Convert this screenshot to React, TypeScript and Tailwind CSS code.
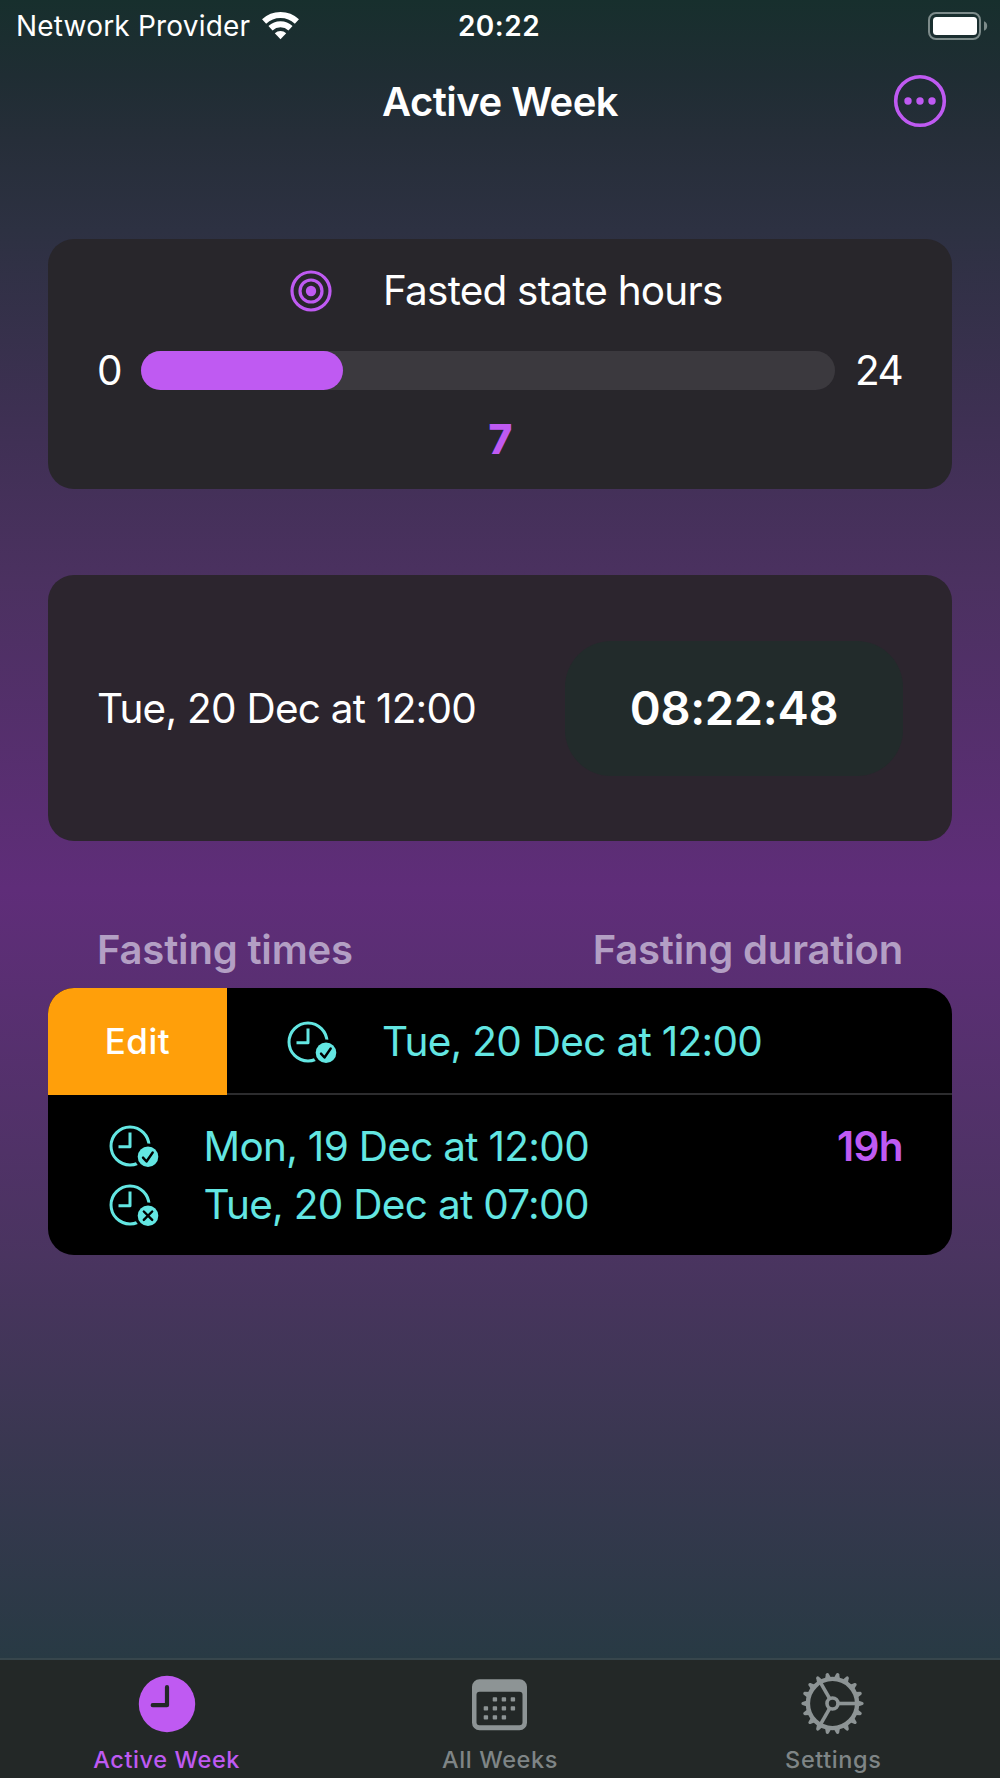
import type { ReactNode } from 'react';
import clsx from 'clsx';

const GOAL_HOURS = 7;
const DAY_HOURS = 24;

function WifiIcon() {
  return (
    <svg width="37" height="28" viewBox="0 0 37 28" className="text-white">
      <g fill="none" stroke="currentColor" strokeWidth="6">
        <path d="M2.1 9.5a24 24 0 0 1 32.8 0" />
        <path d="M8.5 16.3a14.7 14.7 0 0 1 20 0" />
      </g>
      <path d="M18.5 27.2l-5.7-5.9a8.2 8.2 0 0 1 11.4 0z" fill="currentColor" />
    </svg>
  );
}

function BatteryIcon() {
  return (
    <svg width="60" height="28" viewBox="0 0 60 28">
      <rect x="1" y="1" width="51" height="26" rx="7" fill="none" stroke="#7d8b8a" strokeWidth="2" />
      <rect x="5" y="5" width="44" height="18" rx="3.5" fill="#fff" />
      <path d="M56 9.2a5.2 5.2 0 0 1 0 9.6z" fill="#7d8b8a" />
    </svg>
  );
}

function MoreIcon() {
  return (
    <svg width="54" height="54" viewBox="0 0 54 54">
      <circle cx="27" cy="27" r="24.3" fill="none" stroke="#bf5af2" strokeWidth="3.6" />
      <circle cx="15" cy="27" r="3.7" fill="#bf5af2" />
      <circle cx="27" cy="27" r="3.7" fill="#bf5af2" />
      <circle cx="39" cy="27" r="3.7" fill="#bf5af2" />
    </svg>
  );
}

function TargetIcon() {
  return (
    <svg width="42" height="42" viewBox="0 0 42 42">
      <g fill="none" stroke="#bf5af2" strokeWidth="3.2">
        <circle cx="21" cy="21" r="19" />
        <circle cx="21" cy="21" r="11" />
      </g>
      <circle cx="21" cy="21" r="5.2" fill="#bf5af2" />
    </svg>
  );
}

function ClockBadgeIcon({ type }: { type: 'check' | 'cross' }) {
  return (
    <svg width="50" height="42" viewBox="0 0 50 42">
      <g fill="none" stroke="#63e6e2" strokeWidth="3" strokeLinejoin="round">
        <circle cx="21" cy="21" r="19" />
        <path d="M21 7.5v14.3H9.5" />
      </g>
      <circle cx="39" cy="31.7" r="13.2" fill="#000" />
      <circle cx="39" cy="31.7" r="10.3" fill="#63e6e2" />
      <path
        d={type === 'check' ? 'M34 32.6l3.5 3.9 6.2-9' : 'M34.8 27.5l8.4 8.4M43.2 27.5l-8.4 8.4'}
        fill="none"
        stroke="#000"
        strokeWidth="2.4"
        strokeLinecap="round"
        strokeLinejoin="round"
      />
    </svg>
  );
}

function ClockFillIcon() {
  return (
    <svg width="58" height="64" viewBox="0 0 58 64">
      <circle cx="29" cy="32" r="28.2" fill="#bf5af2" />
      <path
        d="M29 15.2v18H14.7"
        fill="none"
        stroke="#232827"
        strokeWidth="4.2"
        strokeLinecap="round"
        strokeLinejoin="round"
      />
    </svg>
  );
}

const calendarDots = [
  [21, 18], [30, 18], [39, 18],
  [12, 27], [21, 27], [30, 27], [39, 27],
  [12, 36], [21, 36], [30, 36],
];

function CalendarIcon() {
  return (
    <svg width="56" height="64" viewBox="0.5 -7.2 56 64">
      <path
        fillRule="evenodd"
        d="M8 0h40a7.5 7.5 0 0 1 7.5 7.5v36a7.5 7.5 0 0 1-7.5 7.5H8a7.5 7.5 0 0 1-7.5-7.5v-36A7.5 7.5 0 0 1 8 0zM8 12.6a3 3 0 0 0-3 3v27.4a3 3 0 0 0 3 3h40a3 3 0 0 0 3-3V15.6a3 3 0 0 0-3-3z"
        fill="#8d9495"
      />
      {calendarDots.map(([x, y]) => (
        <rect key={`${x}-${y}`} x={x + 0.2} y={y} width="4.4" height="4.4" rx="0.8" fill="#8d9495" />
      ))}
    </svg>
  );
}

const teeth = Array.from({ length: 18 }, (_, i) => i * 20);

function GearIcon() {
  return (
    <svg width="64" height="64" viewBox="-31.5 -31.5 64 64">
      <g fill="#8d9495">
        {teeth.map((angle) => (
          <path
            key={angle}
            d="M25-3.2L30-1.5a1.6 1.6 0 0 1 0 3L25 3.2z"
            transform={`rotate(${angle})`}
          />
        ))}
      </g>
      <g fill="none" stroke="#8d9495">
        <circle r="24.6" strokeWidth="4.4" />
        <circle r="5.5" strokeWidth="3.6" />
        {[0, 120, 240].map((angle) => (
          <path key={angle} d="M6.5 0H24" strokeWidth="3.6" transform={`rotate(${angle})`} />
        ))}
      </g>
    </svg>
  );
}

function TimeRow({ type, children }: { type: 'check' | 'cross'; children: ReactNode }) {
  return (
    <div className="flex items-center gap-[45px]">
      <ClockBadgeIcon type={type} />
      <span className="pt-px tracking-[-0.7px] text-[#63e6e2]">{children}</span>
    </div>
  );
}

function Tab({ icon, label, active }: { icon: ReactNode; label: string; active?: boolean }) {
  return (
    <button
      className={clsx(
        'flex flex-1 flex-col items-center pt-3 text-[23.5px] leading-[30px] font-medium',
        active ? 'text-[#bf5af2]' : 'text-[#7f8586]'
      )}
    >
      {icon}
      <span className="mt-[9px] tracking-[0.6px]">{label}</span>
    </button>
  );
}

export default function App() {
  return (
    <div className="flex h-[1778px] w-[1000px] flex-col overflow-hidden bg-[linear-gradient(180deg,#172f2d_0px,#1f2d33_75px,#262e39_140px,#2d3142_230px,#3f3054_430px,#4b3160_580px,#5f2d79_889px,#4a3460_1255px,#3a3751_1440px,#283a44_1659px)] font-[Inter,sans-serif] text-[40.5px] leading-[50px] text-white">
      <div className="grid h-[51px] grid-cols-[1fr_auto_1fr] items-center pr-3 pl-4 text-[28px]">
        <div className="flex items-center gap-3">
          <span className="tracking-[0.2px]">Network Provider</span>
          <WifiIcon />
        </div>
        <span className="pr-1.5 font-semibold tracking-[0.5px]">20:22</span>
        <div className="flex justify-end">
          <BatteryIcon />
        </div>
      </div>

      <header className="grid h-[100px] grid-cols-[1fr_auto_1fr] items-center px-[53px]">
        <h1 className="col-start-2 pt-0.5 text-[40px] font-semibold tracking-[-0.5px]">Active Week</h1>
        <button className="justify-self-end">
          <MoreIcon />
        </button>
      </header>

      <main className="flex flex-1 flex-col px-12 pt-[88px]">
        <section className="h-[250px] rounded-[26px] bg-[#28262b] px-[49px] pt-[27px]">
          <div className="flex items-center pl-[193px]">
            <TargetIcon />
            <span className="ml-[51px] tracking-[-0.8px]">Fasted state hours</span>
          </div>
          <div className="mt-7 flex items-center">
            <span className="w-11 pt-0.5">0</span>
            <div className="h-[39px] w-[694px] rounded-full bg-[#3b393e]">
              <div
                className="h-full rounded-full bg-[#bf5af2]"
                style={{ width: `${(GOAL_HOURS / DAY_HOURS) * 100}%` }}
              />
            </div>
            <span className="ml-5 pt-0.5 tracking-[-1.5px]">{DAY_HOURS}</span>
          </div>
          <div className="mt-[19px] pl-px text-center font-extrabold text-[#bf5af2]">{GOAL_HOURS}</div>
        </section>

        <section className="mt-[86px] flex h-[266px] items-center justify-between rounded-[26px] bg-[#2c252e] px-[49px]">
          <span className="pt-0.5 tracking-[-0.75px]">Tue, 20 Dec at 12:00</span>
          <div className="flex h-[135px] w-[338px] items-center justify-center rounded-[46px] bg-[#222b2b] text-[47px] font-semibold tracking-[-0.3px]">
            08:22:48
          </div>
        </section>

        <div className="mt-[84px] flex justify-between px-[49px] text-[40px] font-semibold tracking-[-0.18px] text-[#b39fc4]">
          <h2>Fasting times</h2>
          <h2>Fasting duration</h2>
        </div>

        <section className="mt-[13px] overflow-hidden rounded-[26px] bg-black">
          <div className="flex h-[106.5px]">
            <button className="w-[179px] bg-[#ff9f0a] text-[35px] font-medium tracking-[0.5px]">Edit</button>
            <div className="flex flex-1 items-center border-b-2 border-[#2c2c2e] pt-[3px] pl-[60px]">
              <TimeRow type="check">Tue, 20 Dec at 12:00</TimeRow>
            </div>
          </div>
          <div className="flex justify-between pt-[26px] pr-[49px] pb-[24.5px] pl-[60.5px]">
            <div className="flex flex-col gap-[7.5px]">
              <TimeRow type="check">Mon, 19 Dec at 12:00</TimeRow>
              <TimeRow type="cross">Tue, 20 Dec at 07:00</TimeRow>
            </div>
            <span className="pt-px font-semibold tracking-[-0.6px] text-[#bf5af2]">19h</span>
          </div>
        </section>
      </main>

      <nav className="flex h-[120px] border-t-2 border-[#37464c] bg-[#232827]">
        <Tab icon={<ClockFillIcon />} label="Active Week" active />
        <Tab icon={<CalendarIcon />} label="All Weeks" />
        <Tab icon={<GearIcon />} label="Settings" />
      </nav>
    </div>
  );
}
